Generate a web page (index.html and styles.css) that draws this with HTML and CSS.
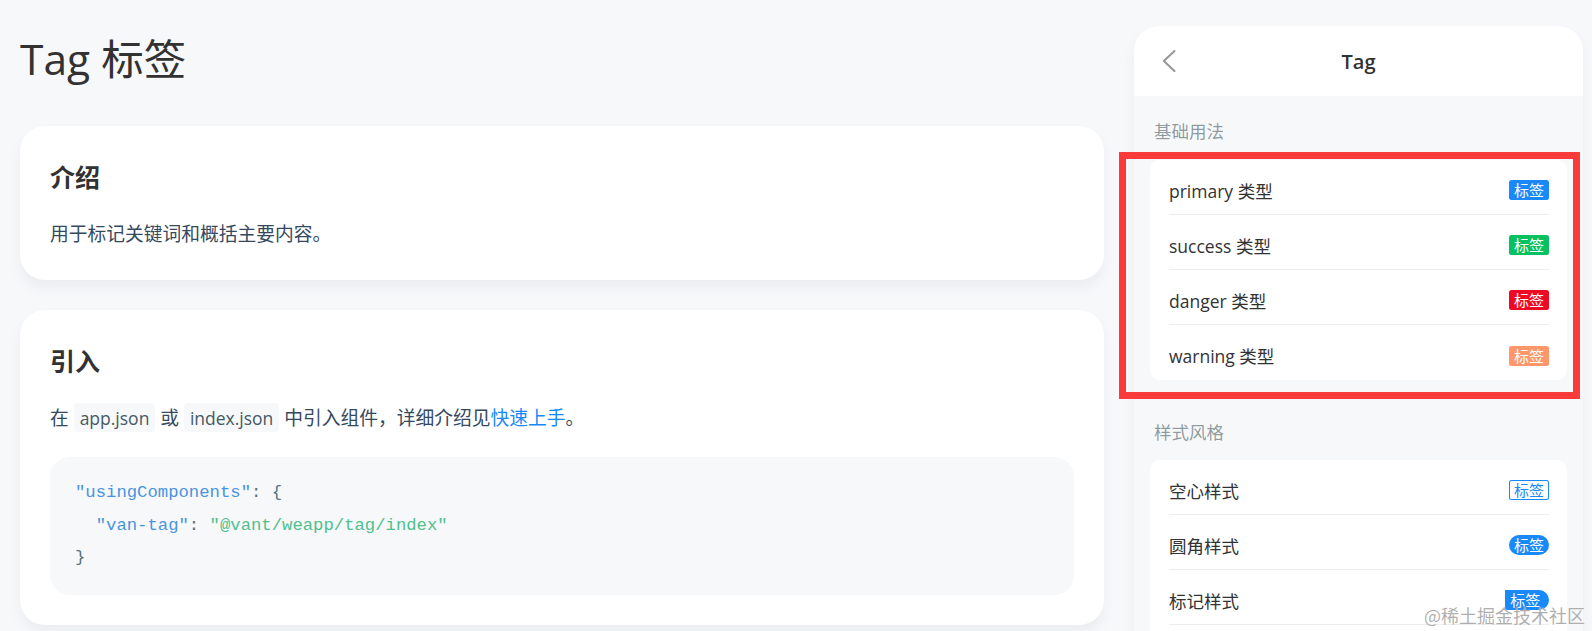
FILE: index.html
```html
<!DOCTYPE html>
<html lang="zh-CN">
<head>
<meta charset="utf-8">
<title>Tag 标签</title>
<link rel="stylesheet" href="styles.css">
</head>
<body>
<div class="layout">
  <main class="doc">
    <h1 class="doc-title">Tag 标签</h1>
    <section class="card">
      <h3 class="card-title">介绍</h3>
      <p class="card-text">用于标记关键词和概括主要内容。</p>
    </section>
    <section class="card">
      <h3 class="card-title">引入</h3>
      <p class="card-text">在 <code class="inline-code">app.json</code> 或 <code class="inline-code">index.json</code> 中引入组件，详细介绍见<a class="link" href="#">快速上手</a>。</p>
      <div class="code">
        <div class="code-line"><span class="tok-attr">"usingComponents"</span><span class="tok-punc">: {</span></div>
        <div class="code-line indent"><span class="tok-attr">"van-tag"</span><span class="tok-punc">: </span><span class="tok-str">"@vant/weapp/tag/index"</span></div>
        <div class="code-line"><span class="tok-punc">}</span></div>
      </div>
    </section>
  </main>

  <aside class="sim">
    <div class="sim-nav">
      <div class="back">
        <svg width="14" height="22" viewBox="0 0 14 22" aria-hidden="true">
          <polyline points="12.5,1 1.8,11 12.5,21" fill="none" stroke="#969799" stroke-width="2" stroke-linecap="round" stroke-linejoin="round"/>
        </svg>
      </div>
      <div class="sim-title">Tag</div>
      <div></div>
    </div>

    <div class="demo-title">基础用法</div>
    <div class="group">
      <div class="cell"><div class="cell-inner"><span>primary 类型</span><span class="tag tag-primary">标签</span></div></div>
      <div class="cell"><div class="cell-inner"><span>success 类型</span><span class="tag tag-success">标签</span></div></div>
      <div class="cell"><div class="cell-inner"><span>danger 类型</span><span class="tag tag-danger">标签</span></div></div>
      <div class="cell"><div class="cell-inner"><span>warning 类型</span><span class="tag tag-warning">标签</span></div></div>
    </div>

    <div class="demo-title demo-title-next">样式风格</div>
    <div class="group group-continued">
      <div class="cell"><div class="cell-inner"><span>空心样式</span><span class="tag tag-plain">标签</span></div></div>
      <div class="cell"><div class="cell-inner"><span>圆角样式</span><span class="tag tag-primary tag-round">标签</span></div></div>
      <div class="cell"><div class="cell-inner"><span>标记样式</span><span class="tag tag-primary tag-mark">标签</span></div></div>
    </div>
  </aside>
</div>

<div class="highlight"></div>
<div class="watermark">@稀土掘金技术社区</div>
</body>
</html>
```

FILE: styles.css
```css
html, body {
  margin: 0;
  height: 631px;
  overflow: hidden;
}

body {
  position: relative;
  background: #f7f8fa;
  font-family: "Open Sans", "Noto Sans CJK SC", sans-serif;
  color: #323233;
}

.layout {
  display: flex;
  align-items: flex-start;
}

/* ---------- documentation column ---------- */
.doc {
  flex: none;
  width: 1084px;
  margin-left: 20px;
}

.doc-title {
  margin: 0 0 42px;
  padding-top: 33px;
  font-size: 42.5px;
  line-height: 51px;
  font-weight: 400;
  color: #323233;
}

.card {
  background: #fff;
  border-radius: 25px;
  padding: 33px 30px 30px;
  margin-bottom: 30px;
  box-shadow: 0 8px 12px #ebedf0;
}

.card-title {
  margin: 0 0 21px;
  font-size: 25px;
  line-height: 37.5px;
  font-weight: 600;
  color: #323233;
}

.card-text {
  margin: 0;
  font-size: 18.75px;
  line-height: 32.5px;
  color: #34495e;
}

.inline-code {
  font-family: inherit;
  font-size: 17.5px;
  padding: 2.5px 6px;
  background: #f7f8fa;
  border-radius: 4px;
  color: #455a64;
}

.link {
  color: #1989fa;
  text-decoration: none;
}

.code {
  margin: 23px 0 0;
  padding: 20px 25px;
  background: #f7f8fa;
  border-radius: 20px;
  font-family: "Liberation Mono", monospace;
  font-size: 17.25px;
  line-height: 32.5px;
  color: #58727e;
}

.code-line {
  white-space: pre;
  height: 32.5px;
}

.code-line.indent {
  padding-left: 20.7px;
}

.tok-attr { color: #4994df; }
.tok-str { color: #4fc08d; }
.tok-punc { color: #58727e; }

/* ---------- simulator ---------- */
.sim {
  flex: none;
  width: 449px;
  margin-left: 30px;
  margin-top: 26px;
  background: #f7f8fa;
  border-radius: 25px;
  overflow: hidden;
  box-shadow: 0 8px 12px #ebedf0;
}

.sim-nav {
  height: 70px;
  background: #fff;
  display: grid;
  grid-template-columns: 1fr auto 1fr;
  align-items: center;
}

.back {
  display: flex;
  padding-left: 28px;
}

.sim-title {
  font-size: 20px;
  font-weight: 600;
  color: #323233;
}

.demo-title {
  padding: 25px 20px 19px;
  font-size: 17.5px;
  line-height: 20px;
  color: rgba(69, 90, 100, 0.6);
}

.demo-title-next {
  padding-top: 42px;
  padding-bottom: 18px;
}

.group {
  margin: 0 16px;
  background: #fff;
  border-radius: 10px;
  overflow: hidden;
}

.group-continued {
  border-radius: 10px 10px 0 0;
  padding-bottom: 40px;
}

.cell {
  padding: 0 18px 0 19px;
}

.cell-inner {
  box-sizing: border-box;
  height: 55px;
  padding-top: 6px;
  border-bottom: 1px solid #ebedf0;
  display: flex;
  align-items: center;
  justify-content: space-between;
  font-size: 17.5px;
  color: #323233;
}

.group:not(.group-continued) .cell:last-child .cell-inner {
  border-bottom: 0;
}

.tag {
  display: inline-flex;
  align-items: center;
  box-sizing: border-box;
  height: 20px;
  padding: 0 5px;
  font-family: "Noto Sans CJK SC", sans-serif;
  font-size: 15px;
  line-height: 20px;
  color: #fff;
  border-radius: 2.5px;
}

.tag-primary { background: #1989fa; }
.tag-success { background: #07c160; }
.tag-danger { background: #ee0a24; }
.tag-warning { background: #ff976a; }

.tag-plain {
  background: #fff;
  color: #1989fa;
  box-shadow: inset 0 0 0 1px #1989fa;
}

.tag-round { border-radius: 999px; }

.tag-mark {
  padding-right: 8.75px;
  border-radius: 0 999px 999px 0;
}

/* ---------- overlays ---------- */
.highlight {
  position: absolute;
  left: 1119px;
  top: 152px;
  width: 461px;
  height: 247px;
  box-sizing: border-box;
  border: 7px solid #fb3a3a;
}

.watermark {
  position: absolute;
  right: 7px;
  bottom: 7px;
  font-family: "Noto Sans CJK SC", sans-serif;
  font-size: 18px;
  line-height: 18px;
  color: rgba(120, 120, 120, 0.6);
  text-shadow: 0 0 1px #fff;
}
```
